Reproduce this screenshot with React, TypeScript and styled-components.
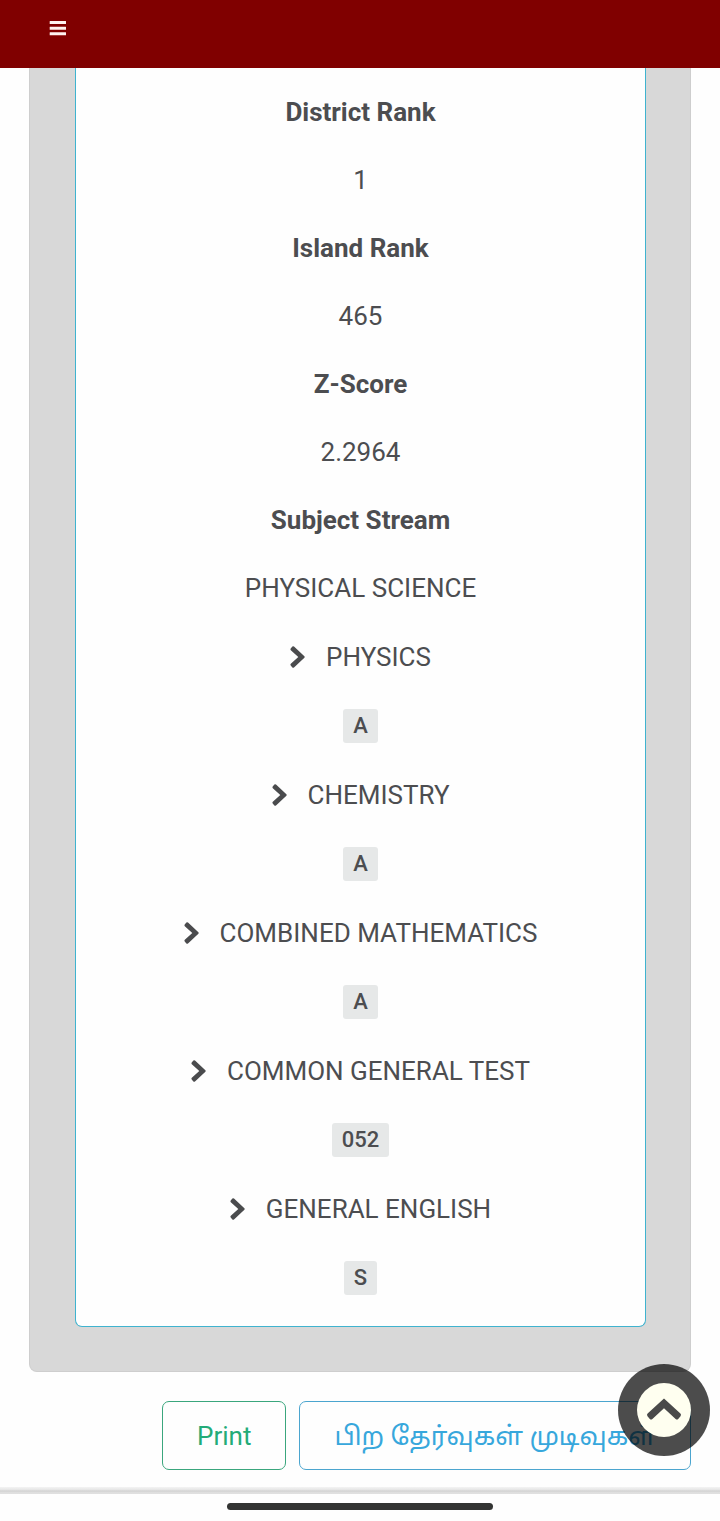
import React from "react";
import styled, { createGlobalStyle } from "styled-components";

const GlobalStyle = createGlobalStyle`
  *, *::before, *::after { box-sizing: border-box; }
  body {
    margin: 0;
    background: #fefefe;
    color: #4c4d50;
    font-family: Roboto, "Noto Sans Tamil", "Noto Sans", sans-serif;
    font-size: 26px;
    line-height: 34px;
  }
  button { font: inherit; color: inherit; cursor: pointer; }
`;

const Header = styled.header`
  height: 68px;
  padding: 20px 49px;
  background: #800000;
  display: flex;
  align-items: flex-start;
`;

const MenuButton = styled.button`
  display: flex;
  padding: 0;
  border: 0;
  background: none;
`;

const Content = styled.main`
  padding: 0 29px 17px;
`;

const Panel = styled.section`
  padding: 0 44px 44px 45px;
  background: #d8d8d8;
  border: 1px solid #cecece;
  border-top: 0;
  border-radius: 0 0 8px 8px;
`;

const Card = styled.div`
  padding: 10px 20px 14px;
  background: #fefefe;
  border: 1px solid #3fb3cf;
  border-top: 0;
  border-radius: 0 0 7px 7px;
`;

const Fields = styled.dl`
  margin: 0;
`;

const FieldName = styled.dt`
  padding: 17px 0;
  font-weight: 700;
  text-align: center;
`;

const FieldValue = styled.dd`
  margin: 0;
  padding: 17px 0;
  text-align: center;
`;

const Subjects = styled.ul`
  margin: 0;
  padding: 0;
  list-style: none;
`;

const Subject = styled.li`
  display: flex;
  flex-direction: column;
  align-items: center;
`;

const SubjectToggle = styled.button`
  display: flex;
  align-items: center;
  gap: 20px;
  height: 69px;
  padding: 0;
  border: 0;
  background: none;
`;

const GradeRow = styled.div`
  display: flex;
  align-items: center;
  height: 69px;
`;

const Grade = styled.span`
  padding: 0 10px;
  border-radius: 3px;
  background: #e6e8e8;
  font-size: 22px;
  font-weight: 500;
`;

const Actions = styled.div`
  display: flex;
  justify-content: flex-end;
  gap: 13px;
  padding-top: 29px;
`;

const ActionButton = styled.button<{ $tone: string; $border: string }>`
  height: 69px;
  padding: 0 34px;
  border: 1px solid ${(p) => p.$border};
  border-radius: 7px;
  background: #fefefe;
  color: ${(p) => p.$tone};
  white-space: nowrap;
`;

const ScrollTop = styled.button`
  position: fixed;
  right: 10px;
  bottom: 65px;
  display: grid;
  place-items: center;
  width: 92px;
  height: 92px;
  padding: 0;
  border: 0;
  border-radius: 50%;
  background: rgba(0, 0, 0, 0.7);
`;

const ScrollDisc = styled.span`
  display: grid;
  place-items: center;
  width: 54px;
  height: 54px;
  border-radius: 50%;
  background: #fffff0;
`;

const SystemBar = styled.footer`
  display: flex;
  flex-direction: column;
  align-items: center;
  gap: 9px;
  padding-bottom: 12px;
  background: #fefefe;
`;

const BarShadow = styled.div`
  width: 100%;
  height: 7px;
  background: linear-gradient(#f4f4f4, #e4e4e4 45%, #cfcfcf 55%, #dedede 75%, #e0e0e0);
`;

const HomeHandle = styled.div`
  width: 37%;
  height: 7px;
  border-radius: 4px;
  background: #333433;
`;

const MenuIcon = () => (
  <svg width="18" height="16" viewBox="0 0 18 16" fill="#fff2f0" aria-hidden="true">
    <rect x="0.7" y="1" width="16.3" height="3" rx="0.3" />
    <rect x="0.7" y="6.7" width="16.3" height="3" rx="0.3" />
    <rect x="0.7" y="12.2" width="16.3" height="3" rx="0.3" />
  </svg>
);

const ChevronRight = () => (
  <svg width="16" height="26" viewBox="0 0 16 26" fill="#4a4b4d" aria-hidden="true">
    <path d="M0.7 4.6 L2.4 2.6 Q3.2 1.9 4 2.6 L14.4 12.2 Q15.1 13 14.4 13.8 L4 23.4 Q3.2 24.1 2.4 23.4 L0.7 21.4 Q0 20.6 0.8 19.8 L8.3 13 L0.8 6.2 Q0 5.4 0.7 4.6 Z" />
  </svg>
);

const ChevronUp = () => (
  <svg width="36" height="24" viewBox="0 0 36 24" fill="#4a4a4a" aria-hidden="true">
    <path d="M18 0.6 L34.4 15.6 Q35.6 16.9 34.5 18.2 L32.2 20.9 Q30.9 22.1 29.6 20.9 L18 10.2 L6.4 20.9 Q5.1 22.1 3.8 20.9 L1.5 18.2 Q0.4 16.9 1.6 15.6 Z" />
  </svg>
);

const fields = [
  { name: "District Rank", value: "1" },
  { name: "Island Rank", value: "465" },
  { name: "Z-Score", value: "2.2964" },
  { name: "Subject Stream", value: "PHYSICAL SCIENCE" },
];

const subjects = [
  { name: "PHYSICS", grade: "A" },
  { name: "CHEMISTRY", grade: "A" },
  { name: "COMBINED MATHEMATICS", grade: "A" },
  { name: "COMMON GENERAL TEST", grade: "052" },
  { name: "GENERAL ENGLISH", grade: "S" },
];

export default function App() {
  return (
    <>
      <GlobalStyle />
      <Header>
        <MenuButton type="button" aria-label="Menu">
          <MenuIcon />
        </MenuButton>
      </Header>
      <Content>
        <Panel>
          <Card>
            <Fields>
              {fields.map((field) => (
                <React.Fragment key={field.name}>
                  <FieldName>{field.name}</FieldName>
                  <FieldValue>{field.value}</FieldValue>
                </React.Fragment>
              ))}
            </Fields>
            <Subjects>
              {subjects.map((subject) => (
                <Subject key={subject.name}>
                  <SubjectToggle type="button">
                    <ChevronRight />
                    {subject.name}
                  </SubjectToggle>
                  <GradeRow>
                    <Grade>{subject.grade}</Grade>
                  </GradeRow>
                </Subject>
              ))}
            </Subjects>
          </Card>
        </Panel>
        <Actions>
          <ActionButton type="button" $tone="#23ab78" $border="#3aa67d">
            Print
          </ActionButton>
          <ActionButton type="button" $tone="#37a7dc" $border="#4ba5cf">
            பிற தேர்வுகள் முடிவுகள்
          </ActionButton>
        </Actions>
      </Content>
      <ScrollTop type="button" aria-label="Back to top">
        <ScrollDisc>
          <ChevronUp />
        </ScrollDisc>
      </ScrollTop>
      <SystemBar>
        <BarShadow />
        <HomeHandle />
      </SystemBar>
    </>
  );
}
